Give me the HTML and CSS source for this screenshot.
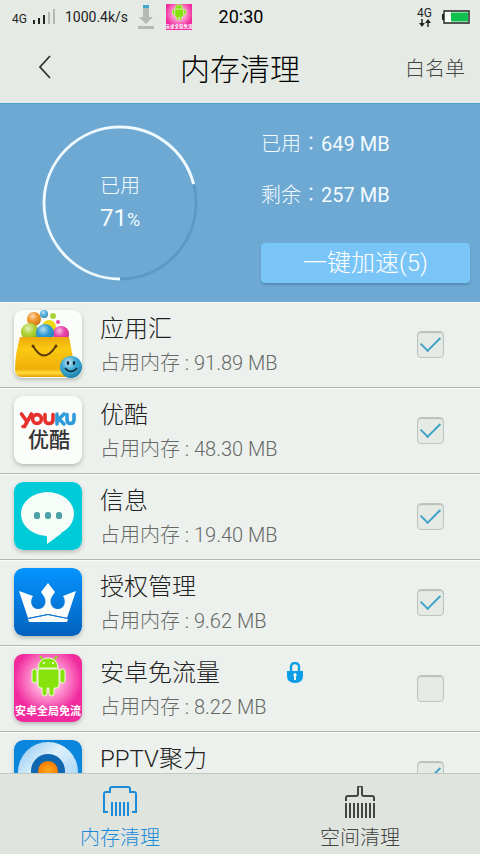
FILE: index.html
```html
<!DOCTYPE html>
<html lang="zh-CN">

<head>
    <meta charset="UTF-8">
    <meta name="viewport" content="width=device-width, initial-scale=1.0">
    <title>内存清理</title>
    <link rel="stylesheet" href="styles.css">
</head>

<body>
    <div class="status">
        <div class="status-left">
            <span class="net">4G</span>
            <svg class="signal" width="23" height="15" viewBox="0 0 23 15">
                <path d="M1 11h2v4H1zM6 9h2v6H6zM11 6h2v9h-2z" fill="#222" />
                <path d="M16 3h2v12h-2zM21 0h2v15h-2z" fill="#b5b8b5" />
            </svg>
            <span class="speed">1000.4k/s</span>
            <svg class="down" width="16" height="24" viewBox="0 0 16 24">
                <path d="M5 3h6v9h4l-7 7-7-7h4z" fill="#b4bab6" />
                <path d="M5 0h6v3H5z" fill="#3fa9cc" />
                <path d="M0 21h16v3H0z" fill="#b4bab6" />
            </svg>
            <svg class="notice" width="26" height="26" viewBox="2 2 64 64">
                <use href="#android-app" />
            </svg>
        </div>
        <span class="clock">20:30</span>
        <div class="status-right">
            <div class="data">
                <span>4G</span>
                <svg width="14" height="8" viewBox="0 0 14 8">
                    <path d="M4 0v5M10 8V3" fill="none" stroke="#222" stroke-width="1.500" />
                    <path d="M1 4h6L4 8zM7 4h6l-3-4z" fill="#222" />
                </svg>
            </div>
            <svg width="28" height="14" viewBox="0 0 28 14">
                <path d="M2 1h25v12H2z" fill="#f4fff4" stroke="#222" stroke-width="1.400" />
                <path d="M0 4h2v6H0z" fill="#222" />
                <path d="M9 2.500h17v9H9z" fill="#0fc04e" />
            </svg>
        </div>
    </div>

    <header>
        <a href="#" class="back" aria-label="返回">
            <svg width="14" height="24" viewBox="0 0 14 24">
                <path d="M12 1L2 12l10 11" fill="none" stroke="#333" stroke-width="1.800" />
            </svg>
        </a>
        <h1>内存清理</h1>
        <a href="#" class="whitelist">白名单</a>
    </header>

    <section class="panel">
        <div class="ring">
            <svg width="156" height="156" viewBox="0 0 156 156">
                <circle cx="78" cy="78" r="76" fill="none" stroke="#5b9ac6" stroke-width="3" />
                <circle cx="78" cy="78" r="76" fill="none" stroke="#eefaff" stroke-width="3" pathLength="100" stroke-dasharray="71 29" transform="rotate(90 78 78)" />
            </svg>
            <div class="ring-text">
                <span>已用</span>
                <span class="percent">71<small>%</small></span>
            </div>
        </div>
        <div class="stats">
            <p>已用<span class="colon" lang="zh-TW">：</span><span class="value">649 MB</span></p>
            <p>剩余<span class="colon" lang="zh-TW">：</span><span class="value">257 MB</span></p>
            <button type="button" class="boost">一键加速(5)</button>
        </div>
    </section>

    <main>
        <ul class="apps">
            <li>
                <svg class="icon" viewBox="0 0 68 68">
                    <defs>
                        <linearGradient id="bag" x1="0" y1="0" x2="0" y2="1">
                            <stop offset="0" stop-color="#eea90b" />
                            <stop offset=".3" stop-color="#fbc912" />
                            <stop offset=".8" stop-color="#f0ae0a" />
                            <stop offset=".9" stop-color="#ffdc3c" />
                            <stop offset="1" stop-color="#e69b00" />
                        </linearGradient>
                        <radialGradient id="shine" cx=".4" cy=".3" r=".7">
                            <stop offset="0" stop-color="#fff" stop-opacity=".7" />
                            <stop offset=".5" stop-color="#fff" stop-opacity=".1" />
                            <stop offset="1" stop-color="#000" stop-opacity=".2" />
                        </radialGradient>
                    </defs>
                    <rect width="68" height="68" rx="9" fill="#fbfdfa" />
                    <circle cx="35" cy="17" r="7" fill="#f2d716" />
                    <circle cx="20" cy="9" r="7" fill="#f08a12" />
                    <circle cx="20" cy="9" r="7" fill="url(#shine)" />
                    <circle cx="16" cy="22" r="9" fill="#a4cc1b" />
                    <circle cx="16" cy="22" r="9" fill="url(#shine)" />
                    <circle cx="47" cy="24" r="8" fill="#e52da0" />
                    <circle cx="47" cy="24" r="8" fill="url(#shine)" />
                    <circle cx="31" cy="23" r="9" fill="#1a91d0" />
                    <circle cx="31" cy="23" r="9" fill="url(#shine)" />
                    <circle cx="30" cy="4" r="4" fill="#42aadb" />
                    <circle cx="30" cy="4" r="4" fill="url(#shine)" />
                    <circle cx="39" cy="6" r="3" fill="#aad23a" />
                    <circle cx="44" cy="12" r="2" fill="#e64ca5" />
                    <path d="M6 27h49q4 20 6 33q0 7-7 7H8q-7 0-7-7Q1 44 6 27z" fill="url(#bag)" />
                    <path d="M19 36q11 19 23 0" fill="none" stroke="#5d3909" stroke-width="2" />
                    <circle cx="19" cy="36" r="1.500" fill="#5d3909" />
                    <circle cx="42" cy="36" r="1.500" fill="#5d3909" />
                    <circle cx="57" cy="57" r="11" fill="#249fce" />
                    <circle cx="57" cy="57" r="11" fill="url(#shine)" />
                    <ellipse cx="54" cy="53" rx="1.300" ry="2" fill="#123" />
                    <ellipse cx="60" cy="53" rx="1.300" ry="2" fill="#123" />
                    <path d="M51 58q6 7 12 0" fill="none" stroke="#123" stroke-width="1.400" />
                </svg>
                <div class="info">
                    <label for="app1">应用汇</label>
                    <p>占用内存 : 91.89 MB</p>
                </div>
                <input type="checkbox" id="app1" checked>
            </li>
            <li>
                <svg class="icon" viewBox="0 0 68 68">
                    <rect width="68" height="68" rx="9" fill="#fbfdfa" />
                    <g fill="none" stroke="#e5302e" stroke-width="3.600" stroke-linecap="round" stroke-linejoin="round">
                        <path d="M7.500 18l5 7M17.500 18l-7 12.500H9" />
                        <circle cx="23" cy="23" r="4.400" />
                        <path d="M31 18.500v5q0 4 4 4t4-4v-5" />
                    </g>
                    <g fill="none" stroke="#2e9cdb" stroke-width="3.600" stroke-linecap="round" stroke-linejoin="round">
                        <path d="M43 18v10M50 18l-5 5 5 5" />
                        <path d="M53 18.500v5q0 4 3.500 4t3.500-4v-5" />
                    </g>
                    <text x="35" y="51" class="youku">优酷</text>
                </svg>
                <div class="info">
                    <label for="app2">优酷</label>
                    <p>占用内存 : 48.30 MB</p>
                </div>
                <input type="checkbox" id="app2" checked>
            </li>
            <li>
                <svg class="icon" viewBox="0 0 68 68">
                    <rect width="68" height="68" rx="9" fill="#00cbd8" />
                    <ellipse cx="33.500" cy="32" rx="26.500" ry="22" fill="#f6fcf8" />
                    <path d="M30 52q3 1 3 4v6q7-5 15-11z" fill="#f6fcf8" />
                    <g fill="#4ba3a8">
                        <rect x="20" y="30" width="6" height="7" rx="2.500" />
                        <rect x="31" y="30" width="6" height="7" rx="2.500" />
                        <rect x="42" y="30" width="6" height="7" rx="2.500" />
                    </g>
                </svg>
                <div class="info">
                    <label for="app3">信息</label>
                    <p>占用内存 : 19.40 MB</p>
                </div>
                <input type="checkbox" id="app3" checked>
            </li>
            <li>
                <svg class="icon" viewBox="0 0 68 68">
                    <defs>
                        <linearGradient id="blue" x1="0" y1="0" x2="0" y2="1">
                            <stop offset="0" stop-color="#0694ff" />
                            <stop offset="1" stop-color="#0262bd" />
                        </linearGradient>
                    </defs>
                    <rect width="68" height="68" rx="9" fill="url(#blue)" />
                    <path d="M5 23l14 5c-4 6-1 13 5 13 7 0 10-8 5-14l-2-3 7-9 7 9-2 3c-5 6-2 14 5 14 6 0 9-7 5-13l13-5-9 27-19-4-20 4z" fill="#fafdfb" />
                    <path d="M14 51l20-4 20 4-1 3H15z" fill="#fafdfb" />
                    <path d="M14 50.500l20-4 20 4" fill="none" stroke="#1478d2" stroke-width="1" />
                </svg>
                <div class="info">
                    <label for="app4">授权管理</label>
                    <p>占用内存 : 9.62 MB</p>
                </div>
                <input type="checkbox" id="app4" checked>
            </li>
            <li>
                <svg class="icon" viewBox="0 0 68 68">
                    <defs>
                        <radialGradient id="pink" cx=".5" cy=".38" r=".5">
                            <stop offset="0" stop-color="#fff" />
                            <stop offset=".4" stop-color="#ffa6d8" />
                            <stop offset="1" stop-color="#f12a9e" />
                        </radialGradient>
                    </defs>
                    <g id="android-app">
                        <rect width="68" height="68" rx="4" fill="url(#pink)" />
                        <g fill="#86e30c" stroke="#e9ffd0" stroke-width="1">
                            <path d="M29 6l-3-4M40 6l3-4" stroke="#86e30c" stroke-width="2" />
                            <path d="M24 14q1-10 10-10t10 10z" />
                            <rect x="18" y="15" width="5" height="14" rx="2.500" />
                            <rect x="46" y="15" width="5" height="14" rx="2.500" />
                            <path d="M24 15h21v16q0 3-3 3h-2v5q0 3-2.500 3T35 39v-5h-2v5q0 3-2.500 3T28 39v-5h-1q-3 0-3-3z" />
                        </g>
                        <circle cx="30" cy="9" r="1" fill="#fff" />
                        <circle cx="39" cy="9" r="1" fill="#fff" />
                        <text x="34" y="61" class="android-name">安卓全局免流</text>
                    </g>
                </svg>
                <div class="info">
                    <div class="locked">
                        <label for="app5">安卓免流量</label>
                        <svg width="16" height="22" viewBox="0 0 16 22">
                            <path d="M4 10V5q0-4 4-4t4 4v5" fill="none" stroke="#0b9de6" stroke-width="2.400" />
                            <path d="M0 9h16v5q0 7-8 7t-8-7z" fill="#0b9de6" />
                            <path d="M8 11a2 2 0 0 1 1 3.500V18H7v-3.500A2 2 0 0 1 8 11z" fill="#eef5f2" />
                        </svg>
                    </div>
                    <p>占用内存 : 8.22 MB</p>
                </div>
                <input type="checkbox" id="app5">
            </li>
            <li>
                <svg class="icon" viewBox="0 0 68 68">
                    <defs>
                        <linearGradient id="pale" x1="0" y1="0" x2="1" y2="1">
                            <stop offset="0" stop-color="#8cc6ef" />
                            <stop offset=".4" stop-color="#dff1fc" />
                            <stop offset="1" stop-color="#8cc6ef" />
                        </linearGradient>
                        <radialGradient id="orange">
                            <stop offset="0" stop-color="#ffab1e" />
                            <stop offset="1" stop-color="#f47d05" />
                        </radialGradient>
                    </defs>
                    <rect width="68" height="68" rx="9" fill="#0a86dd" />
                    <circle cx="34" cy="32" r="30" fill="url(#pale)" />
                    <circle cx="34" cy="31" r="17" fill="#0f67b0" />
                    <circle cx="34" cy="31" r="10" fill="url(#orange)" />
                </svg>
                <div class="info">
                    <label for="app6">PPTV聚力</label>
                </div>
                <input type="checkbox" id="app6" checked>
            </li>
        </ul>
    </main>

    <nav>
        <a href="#" class="active">
            <svg width="34" height="32" viewBox="0 0 34 32">
                <path d="M5 26H1V8q0-2 2-2h4V3q0-2 2-2h16q2 0 2 2v3h4q2 0 2 2v18h-4" fill="none" stroke="currentColor" stroke-width="2" />
                <path d="M9 16v14M13 16v14M17 16v14M21 16v14M25 16v14" stroke="currentColor" stroke-width="2" />
            </svg>
            内存清理
        </a>
        <a href="#">
            <svg width="34" height="32" viewBox="0 0 34 32">
                <path d="M3 15v-3q0-2 2-2h8q2 0 2-2V2q0-2 2-2t2 2v6q0 2 2 2h8q2 0 2 2v3" fill="none" stroke="currentColor" stroke-width="2" />
                <path d="M3 17v15M7 17v15M11 17v15M15 17v15M19 17v15M23 17v15M27 17v15M31 17v15" stroke="currentColor" stroke-width="2" />
            </svg>
            空间清理
        </a>
    </nav>
</body>

</html>
```
FILE: styles.css
```css
* {
    box-sizing: border-box;
}

body {
    margin: 0;
    height: 100vh;
    display: flex;
    flex-direction: column;
    background-color: #e5eae5;
    font-family: Roboto, "Noto Sans CJK SC", sans-serif;
    font-weight: 300;
    color: #222;
}

a {
    text-decoration: none;
    color: inherit;
}

h1,
p,
ul {
    margin: 0;
    padding: 0;
    font-weight: inherit;
}

svg {
    display: block;
    flex: none;
}

/* status bar */
.status {
    display: grid;
    grid-template-columns: 1fr auto 1fr;
    align-items: center;
    height: 33px;
    padding: 0 10px 0 12px;
    font-weight: 400;
}

.status-left {
    display: flex;
    align-items: center;
}

.net {
    font-size: 12px;
    padding-top: 4px;
}

.signal {
    margin: 0 10px 0 5px;
}

.speed {
    font-size: 14px;
}

.down {
    margin: 0 12px 0 10px;
}

.clock {
    font-size: 18px;
    color: #000;
}

.status-right {
    display: flex;
    justify-content: flex-end;
    align-items: center;
    gap: 10px;
}

.data {
    display: flex;
    flex-direction: column;
    align-items: center;
    font-size: 12px;
    line-height: 12px;
}

/* title bar */
header {
    display: grid;
    grid-template-columns: 1fr auto 1fr;
    align-items: center;
    height: 70px;
    padding: 0 15px 2px 38px;
}

.back {
    justify-self: start;
}

h1 {
    font-size: 30px;
    color: #000;
    margin-right: 23px;
}

.whitelist {
    justify-self: end;
    font-size: 20px;
    color: #444;
}

/* memory usage */
.panel {
    display: grid;
    grid-template-columns: 1fr 1fr;
    padding: 13px 0 19px;
    border-top: 1px solid #4aa3cf;
    background-color: #6da9d3;
    color: #f4fbff;
    font-size: 20px;
}

.ring {
    display: grid;
    place-items: center;
    padding-top: 6px;
}

.ring > * {
    grid-area: 1 / 1;
}

.ring-text {
    display: flex;
    flex-direction: column;
    align-items: center;
    line-height: 32px;
}

.percent {
    font-size: 24px;
    font-weight: 400;
}

.percent small {
    font-size: 18px;
}

.stats {
    padding: 0 10px 0 21px;
}

.stats p {
    height: 51px;
    line-height: 51px;
}

.colon {
    font-family: "Noto Sans CJK TC", sans-serif;
}

.value {
    font-weight: 400;
}

.boost {
    display: block;
    width: 100%;
    height: 40px;
    margin-top: 24px;
    padding: 0;
    border: none;
    border-radius: 4px;
    background-color: #7ac5f7;
    box-shadow: 0 2px 2px #5590b9;
    color: #fff;
    font: inherit;
    font-size: 24px;
    line-height: 40px;
}

/* app list */
main {
    flex: 1;
    min-height: 0;
    overflow: hidden;
    background-color: #edf1ed;
}

.apps {
    list-style: none;
}

.apps li {
    display: flex;
    align-items: flex-start;
    height: 86px;
    padding: 7px 36px 0 14px;
    border-top: 1px solid #fafcfa;
    border-bottom: 1px solid #b3b8b4;
}

.icon {
    width: 68px;
    height: 68px;
    border-radius: 9px;
    box-shadow: 0 2px 4px #b4bab5;
}

.youku {
    font-size: 21px;
    font-weight: 500;
    text-anchor: middle;
    fill: #333;
}

.android-name {
    font-size: 11px;
    font-weight: 700;
    text-anchor: middle;
    fill: #fff;
}

.info {
    flex: 1;
    padding: 2px 0 0 18px;
}

.info label {
    display: block;
    font-size: 24px;
    line-height: 34px;
}

.info p {
    font-size: 20px;
    line-height: 34px;
    color: #666966;
}

.locked {
    display: flex;
    align-items: center;
}

.locked label {
    width: 187px;
}

input {
    appearance: none;
    display: grid;
    place-items: center;
    width: 27px;
    height: 27px;
    margin: 21px 0 0;
    border: 1px solid #bfc4bf;
    border-radius: 4px;
    background-color: #e6eae5;
    box-shadow: inset 0 1px 1px #b8bdb8;
}

input:checked::before {
    content: "";
    width: 17px;
    height: 9px;
    margin-bottom: 6px;
    border: solid #3fa3c8;
    border-width: 0 0 2px 2px;
    transform: rotate(-45deg);
}

/* bottom tabs */
nav {
    display: grid;
    grid-template-columns: 1fr 1fr;
    height: 81px;
    border-top: 1px solid #c3c8c3;
    background-color: #dfe4de;
    font-size: 20px;
}

nav a {
    display: flex;
    flex-direction: column;
    align-items: center;
    gap: 5px;
    padding-top: 12px;
    line-height: 30px;
    color: #444;
}

nav .active {
    color: #1b8ad8;
}
```
